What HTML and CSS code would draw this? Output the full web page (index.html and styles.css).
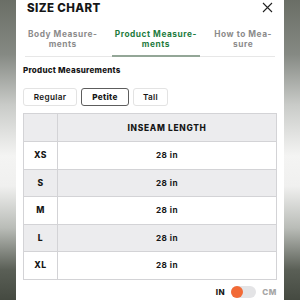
FILE: index.html
```html
<!DOCTYPE html>
<html lang="en">
<head>
    <meta charset="UTF-8">
    <link rel="stylesheet" href="styles.css">
</head>
<body>
    <div class="panel">
        <div class="header">
            <h2>SIZE CHART</h2>
            <svg class="close" width="11" height="11" viewBox="0 0 11 11">
                <path d="M1 1L10 10M10 1L1 10" stroke="#222" stroke-width="1.1" fill="none"/>
            </svg>
        </div>

        <div class="tabs">
            <div class="tab">Body Measure-<br>ments</div>
            <div class="tab active">Product Measure-<br>ments</div>
            <div class="tab">How to Mea-<br>sure</div>
        </div>

        <div class="section-title">Product Measurements</div>

        <div class="fits">
            <span class="fit">Regular</span>
            <span class="fit selected">Petite</span>
            <span class="fit">Tall</span>
        </div>

        <table class="chart">
            <tr class="head">
                <th class="size"></th>
                <th>INSEAM LENGTH</th>
            </tr>
            <tr><td class="size">XS</td><td>28 in</td></tr>
            <tr class="alt"><td class="size">S</td><td>28 in</td></tr>
            <tr><td class="size">M</td><td>28 in</td></tr>
            <tr class="alt"><td class="size">L</td><td>28 in</td></tr>
            <tr><td class="size">XL</td><td>28 in</td></tr>
        </table>

        <div class="units">
            <span class="unit on">IN</span>
            <span class="switch"><span class="knob"></span></span>
            <span class="unit">CM</span>
        </div>
    </div>
</body>
</html>
```

FILE: styles.css
```css
:root {
    --green: #1d7b3d;
    --text: #161616;
    --muted: #8b8b8b;
    --line: #d3d3d6;
    --row-alt: #ececee;
    --orange: #f26a36;
}

html, body {
    margin: 0;
    height: 300px;
    overflow: hidden;
}

body {
    font-family: Inter, "Liberation Sans", sans-serif;
    color: var(--text);
    background: linear-gradient(180deg, #6a6e66 0%, #858983 18%, #c9cbc8 35%, #f4f4f3 52%, #f0f0ef 62%, #b9bcb7 76%, #5a5f56 90%, #454a41 100%);
    display: flex;
    justify-content: center;
}

.panel {
    width: 268px;
    height: 300px;
    background: #fff;
    box-sizing: border-box;
    padding: 0 7px;
    display: flex;
    flex-direction: column;
}

.header {
    display: flex;
    justify-content: space-between;
    align-items: center;
    height: 15px;
    padding: 0 4px;
}

h2 {
    margin: 0;
    font-size: 11.5px;
    font-weight: 800;
    letter-spacing: 0.4px;
    line-height: 14px;
}

.close {
    display: block;
}

.tabs {
    display: flex;
    justify-content: space-between;
    margin: 15px 2px 0;
    border-bottom: 1px solid #e7e7e7;
}

.tab {
    font-size: 8.3px;
    font-weight: 700;
    letter-spacing: 0.55px;
    line-height: 9.5px;
    text-align: center;
    color: var(--muted);
    padding: 0 3px 6px;
    margin-bottom: -1px;
    border-bottom: 2px solid transparent;
}

.tab.active {
    color: var(--green);
    border-bottom-color: #93a697;
}

.section-title {
    margin-top: 8px;
    font-size: 8px;
    font-weight: 800;
    letter-spacing: 0.25px;
    line-height: 10px;
}

.fits {
    display: flex;
    gap: 4px;
    margin-top: 13px;
}

.fit {
    box-sizing: border-box;
    height: 18px;
    line-height: 16px;
    padding: 0;
    font-size: 8.2px;
    font-weight: 600;
    letter-spacing: 0.3px;
    border: 1px solid #e3e3e3;
    border-radius: 3px;
    text-align: center;
}

.fit:first-child { width: 54px; }
.fit:nth-child(2) { width: 48px; }
.fit:last-child { width: 35px; }

.fit.selected {
    border-color: #5d5d5d;
    font-weight: 800;
}

.chart {
    margin-top: 7px;
    width: 254px;
    border-collapse: collapse;
    border: 1px solid #b4b4b6;
    font-size: 8.2px;
    letter-spacing: 0.5px;
}

.chart th,
.chart td {
    border: 1px solid var(--line);
    text-align: center;
    padding: 0;
    height: 26.5px;
}

.chart th {
    font-weight: 800;
    font-size: 8.4px;
    letter-spacing: 0.7px;
    height: 27px;
}

.chart td {
    font-weight: 700;
}

.chart .size {
    width: 33px;
    font-size: 8.6px;
    font-weight: 800;
}

.chart .head,
.chart .alt {
    background: var(--row-alt);
}

.units {
    display: flex;
    justify-content: flex-end;
    align-items: center;
    gap: 6px;
    margin-top: 6px;
}

.unit {
    font-size: 8px;
    font-weight: 800;
    letter-spacing: 0.6px;
    color: #a6a6a6;
}

.unit.on {
    color: var(--text);
}

.switch {
    width: 25px;
    height: 12px;
    border-radius: 6px;
    background: #e4e4e6;
    display: flex;
}

.knob {
    width: 12px;
    height: 12px;
    border-radius: 50%;
    background: var(--orange);
}
```
